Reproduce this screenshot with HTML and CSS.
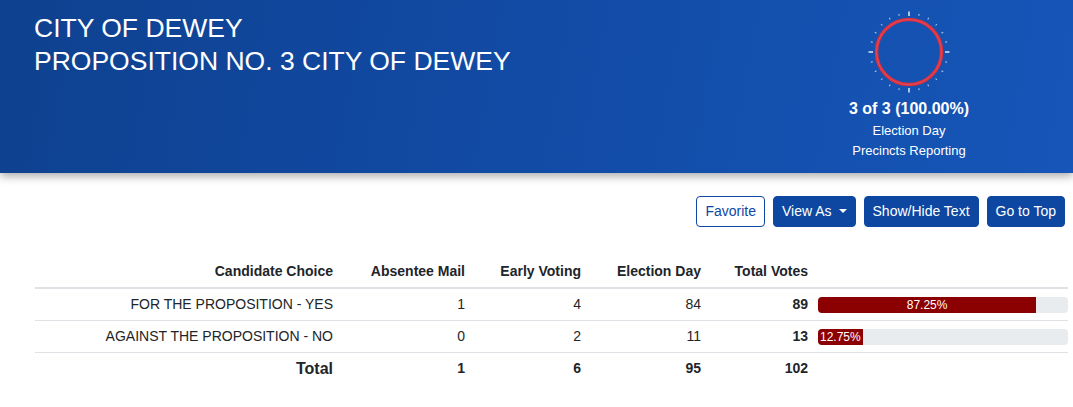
FILE: index.html
```html
<!DOCTYPE html>
<html lang="en">
<head>
<meta charset="utf-8">
<title>City of Dewey - Proposition No. 3</title>
<link rel="stylesheet" href="styles.css">
</head>
<body>
<header class="banner">
  <h1 class="title">CITY OF DEWEY<br>PROPOSITION NO. 3 CITY OF DEWEY</h1>
  <div class="reporting">
    <svg class="gauge" width="90" height="90" viewBox="0 0 90 90" aria-hidden="true">
      <g class="ticks-minor">
        <line x1="45" y1="7.5" x2="45" y2="5.5" transform="rotate(15 45 45)"/>
        <line x1="45" y1="7.5" x2="45" y2="5.5" transform="rotate(30 45 45)"/>
        <line x1="45" y1="7.5" x2="45" y2="5.5" transform="rotate(45 45 45)"/>
        <line x1="45" y1="7.5" x2="45" y2="5.5" transform="rotate(60 45 45)"/>
        <line x1="45" y1="7.5" x2="45" y2="5.5" transform="rotate(75 45 45)"/>
        <line x1="45" y1="7.5" x2="45" y2="5.5" transform="rotate(105 45 45)"/>
        <line x1="45" y1="7.5" x2="45" y2="5.5" transform="rotate(120 45 45)"/>
        <line x1="45" y1="7.5" x2="45" y2="5.5" transform="rotate(135 45 45)"/>
        <line x1="45" y1="7.5" x2="45" y2="5.5" transform="rotate(150 45 45)"/>
        <line x1="45" y1="7.5" x2="45" y2="5.5" transform="rotate(165 45 45)"/>
        <line x1="45" y1="7.5" x2="45" y2="5.5" transform="rotate(195 45 45)"/>
        <line x1="45" y1="7.5" x2="45" y2="5.5" transform="rotate(210 45 45)"/>
        <line x1="45" y1="7.5" x2="45" y2="5.5" transform="rotate(225 45 45)"/>
        <line x1="45" y1="7.5" x2="45" y2="5.5" transform="rotate(240 45 45)"/>
        <line x1="45" y1="7.5" x2="45" y2="5.5" transform="rotate(255 45 45)"/>
        <line x1="45" y1="7.5" x2="45" y2="5.5" transform="rotate(285 45 45)"/>
        <line x1="45" y1="7.5" x2="45" y2="5.5" transform="rotate(300 45 45)"/>
        <line x1="45" y1="7.5" x2="45" y2="5.5" transform="rotate(315 45 45)"/>
        <line x1="45" y1="7.5" x2="45" y2="5.5" transform="rotate(330 45 45)"/>
        <line x1="45" y1="7.5" x2="45" y2="5.5" transform="rotate(345 45 45)"/>
      </g>
      <g class="ticks-major">
        <line x1="45" y1="9" x2="45" y2="4.5"/>
        <line x1="45" y1="9" x2="45" y2="4.5" transform="rotate(90 45 45)"/>
        <line x1="45" y1="9" x2="45" y2="4.5" transform="rotate(180 45 45)"/>
        <line x1="45" y1="9" x2="45" y2="4.5" transform="rotate(270 45 45)"/>
      </g>
      <circle class="ring" cx="45" cy="45" r="32.5"/>
      <circle class="ring-glow" cx="45" cy="45" r="32.5"/>
    </svg>
    <div class="rep-count">3 of 3 (100.00%)</div>
    <div class="rep-line">Election Day</div>
    <div class="rep-line">Precincts Reporting</div>
  </div>
</header>

<main class="content">
  <div class="toolbar">
    <button class="btn btn-outline" type="button">Favorite</button>
    <button class="btn btn-solid" type="button">View As<span class="caret"></span></button>
    <button class="btn btn-solid" type="button">Show/Hide Text</button>
    <button class="btn btn-solid" type="button">Go to Top</button>
  </div>

  <table class="results">
    <colgroup>
      <col class="c-name">
      <col class="c-abs">
      <col class="c-early">
      <col class="c-eday">
      <col class="c-total">
      <col class="c-bar">
    </colgroup>
    <thead>
      <tr>
        <th>Candidate Choice</th>
        <th>Absentee Mail</th>
        <th>Early Voting</th>
        <th>Election Day</th>
        <th>Total Votes</th>
        <th></th>
      </tr>
    </thead>
    <tbody>
      <tr>
        <td>FOR THE PROPOSITION - YES</td>
        <td>1</td>
        <td>4</td>
        <td>84</td>
        <td class="strong">89</td>
        <td class="bar-cell"><div class="progress"><div class="progress-fill" style="width: 87.25%">87.25%</div></div></td>
      </tr>
      <tr>
        <td>AGAINST THE PROPOSITION - NO</td>
        <td>0</td>
        <td>2</td>
        <td>11</td>
        <td class="strong">13</td>
        <td class="bar-cell"><div class="progress"><div class="progress-fill" style="width: 12.75%">12.75%</div></div></td>
      </tr>
      <tr class="total-row">
        <td class="total-label">Total</td>
        <td>1</td>
        <td>6</td>
        <td>95</td>
        <td>102</td>
        <td class="bar-cell"></td>
      </tr>
    </tbody>
  </table>
</main>
</body>
</html>
```

FILE: styles.css
```css
* { box-sizing: border-box; }

html, body {
  margin: 0;
  padding: 0;
  background: #ffffff;
}

body {
  font-family: "Liberation Sans", Arial, sans-serif;
  color: #212529;
  font-size: 14px;
}

.banner {
  display: flex;
  justify-content: space-between;
  align-items: flex-start;
  height: 173px;
  padding: 12px 64px 0 34px;
  background: linear-gradient(100deg, #0e418f 0%, #124ba6 50%, #1656b8 100%);
  color: #ffffff;
  box-shadow: 0 3px 9px rgba(0, 0, 0, 0.35);
  position: relative;
  z-index: 1;
}

.title {
  margin: 0;
  font-size: 26.5px;
  font-weight: normal;
  line-height: 33px;
  letter-spacing: 0;
}

.reporting {
  width: 200px;
  display: flex;
  flex-direction: column;
  align-items: center;
  text-align: center;
  margin-top: -5px;
}

.gauge {
  display: block;
}

.ticks-minor line {
  stroke: rgba(230, 238, 255, 0.75);
  stroke-width: 1;
}

.ticks-major line {
  stroke: #ffffff;
  stroke-width: 1.3;
}

.ring {
  fill: none;
  stroke: #d8303f;
  stroke-width: 3.6;
}

.ring-glow {
  fill: none;
  stroke: rgba(255, 140, 150, 0.4);
  stroke-width: 0.8;
}

.rep-count {
  font-size: 16px;
  font-weight: bold;
  line-height: 24px;
}

.rep-line {
  font-size: 13px;
  line-height: 20px;
}

.content {
  padding: 23px 8px 0 35px;
}

.toolbar {
  display: flex;
  justify-content: flex-end;
  gap: 8px;
}

.btn {
  font-family: "Liberation Sans", Arial, sans-serif;
  font-size: 14px;
  line-height: 17px;
  padding: 6px 8px;
  border-radius: 4px;
  border: 1px solid #0d47a1;
  cursor: pointer;
  display: inline-flex;
  align-items: center;
}

.btn-outline {
  background: #ffffff;
  color: #0d47a1;
}

.btn-solid {
  background: #0d47a1;
  color: #ffffff;
}

.caret {
  display: inline-block;
  margin-left: 7px;
  width: 0;
  height: 0;
  border-top: 4.5px solid #ffffff;
  border-left: 4.5px solid transparent;
  border-right: 4.5px solid transparent;
  position: relative;
  top: -1px;
}

.results {
  margin-top: 29px;
  width: 1033px;
  border-collapse: collapse;
  table-layout: fixed;
}

.c-name { width: 303px; }
.c-abs { width: 132px; }
.c-early { width: 116px; }
.c-eday { width: 120px; }
.c-total { width: 107px; }
.c-bar { width: 255px; }

.results th,
.results td {
  padding: 7px 5px;
  line-height: 17px;
  text-align: right;
  white-space: nowrap;
  font-size: 14px;
}

.results th {
  font-weight: bold;
  border-bottom: 2px solid #dee2e6;
}

.results td {
  border-top: 1px solid #dee2e6;
}

.results .bar-cell {
  padding-right: 0;
}

.strong,
.total-row td {
  font-weight: bold;
}

.results .total-label {
  font-size: 16px;
}

.progress {
  height: 16px;
  width: 250px;
  background: #e9ecef;
  border-radius: 4px;
  overflow: hidden;
  display: flex;
}

.progress-fill {
  background: #8b0000;
  color: #ffffff;
  font-size: 12px;
  font-weight: normal;
  line-height: 16px;
  text-align: center;
  white-space: nowrap;
  min-width: max-content;
  padding: 0 2px;
}
```
